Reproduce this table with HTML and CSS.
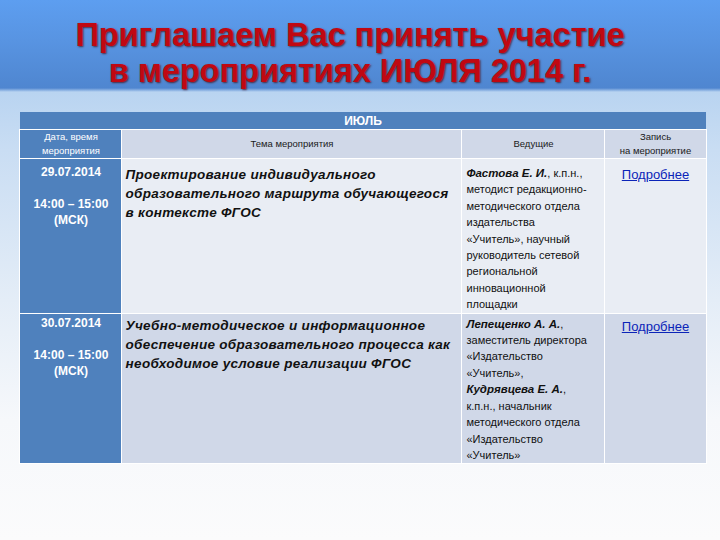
FILE: index.html
```html
<!DOCTYPE html>
<html lang="ru">
<head>
<meta charset="utf-8">
<link rel="stylesheet" href="styles.css">
</head>
<body>
<div class="page">
  <h1 class="title">Приглашаем Вас принять участие<br>в мероприятиях ИЮЛЯ 2014 г.</h1>
  <table class="events">
    <colgroup>
      <col class="c1"><col class="c2"><col class="c3"><col class="c4">
    </colgroup>
    <tr class="month"><th colspan="4">ИЮЛЬ</th></tr>
    <tr class="heads">
      <th class="date">Дата, время<br>мероприятия</th>
      <th>Тема мероприятия</th>
      <th>Ведущие</th>
      <th>Запись<br>на мероприятие</th>
    </tr>
    <tr class="row r1">
      <td class="date"><b>29.07.2014</b><br><br><b>14:00 – 15:00<br>(МСК)</b></td>
      <td class="topic">Проектирование индивидуального<br>образовательного маршрута обучающегося<br>в контексте ФГОС</td>
      <td class="host"><b><i>Фастова Е. И.</i></b>, к.п.н.,<br>методист редакционно-<br>методического отдела<br>издательства<br>«Учитель», научный<br>руководитель сетевой<br>региональной<br>инновационной<br>площадки</td>
      <td class="reg"><a href="#">Подробнее</a></td>
    </tr>
    <tr class="row r2">
      <td class="date"><b>30.07.2014</b><br><br><b>14:00 – 15:00<br>(МСК)</b></td>
      <td class="topic">Учебно-методическое и информационное<br>обеспечение образовательного процесса как<br>необходимое условие реализации ФГОС</td>
      <td class="host"><b><i>Лепещенко А. А.</i></b>,<br>заместитель директора<br>«Издательство<br>«Учитель»,<br><b><i>Кудрявцева Е. А.</i></b>,<br>к.п.н., начальник<br>методического отдела<br>«Издательство<br>«Учитель»</td>
      <td class="reg"><a href="#">Подробнее</a></td>
    </tr>
  </table>
</div>
</body>
</html>
```
FILE: styles.css
```css
html, body {
  margin: 0;
  padding: 0;
}
body {
  width: 720px;
  height: 540px;
  overflow: hidden;
  font-family: "Liberation Sans", Arial, sans-serif;
  background: linear-gradient(to bottom,
    #5d9ef0 0px, #5894e2 40px, #4f86d0 88px,
    #b9d4f1 92px, #c9ddf3 150px, #e4edf7 300px, #f6f8fb 420px, #fbfbfc 540px);
}
.page {
  display: flex;
  flex-direction: column;
  align-items: center;
}
.title {
  margin: 17px 20px 0 0;
  height: 95px;
  font-size: 32.5px;
  line-height: 36px;
  font-weight: bold;
  color: #c00812;
  text-align: center;
  text-shadow: 1px 1px 2px rgba(70, 0, 0, 0.7);
  letter-spacing: 0;
}
.events {
  width: 686px;
  table-layout: fixed;
  border-collapse: collapse;
  margin-left: 6px;
}
.c1 { width: 102px; }
.c2 { width: 340px; }
.c3 { width: 143px; }
.c4 { width: 101px; }
.events th, .events td {
  border: 1px solid #ffffff;
  padding: 0;
}
.month th {
  background: #4f81bd;
  color: #ffffff;
  font-size: 12px;
  font-weight: bold;
  height: 17px;
  text-align: center;
  border-top: none;
  border-left: none;
  border-right: none;
}
.heads th {
  background: #d0d8e8;
  color: #1a1a1a;
  font-size: 9.5px;
  font-weight: normal;
  line-height: 14px;
  height: 28px;
  text-align: center;
}
.heads th.date {
  background: #4f81bd;
  color: #ffffff;
}
.row td {
  vertical-align: top;
}
.r1 td { background: #e9edf4; }
.r2 td { background: #d0d8e8; }
.row td.date {
  background: #4f81bd;
  color: #ffffff;
  text-align: center;
  font-size: 12px;
  line-height: 16px;
  padding-top: 5px;
}
.r2 td.date { padding-top: 1px; }
.topic {
  font-size: 13.5px;
  font-weight: bold;
  font-style: italic;
  line-height: 19px;
  color: #111111;
  padding: 6px 0 0 3px !important;
  letter-spacing: 0.3px;
}
.r2 .topic { padding-top: 2px !important; }
.host {
  font-size: 11px;
  line-height: 16.4px;
  color: #111111;
  padding: 6px 0 0 4px !important;
}
.r2 .host { padding-top: 2px !important; }
.host b i { font-size: 11.5px; }
.reg {
  text-align: center;
  padding-top: 6px !important;
}
.r2 .reg { padding-top: 3px !important; }
.reg a {
  color: #0b24b8;
  font-size: 13px;
  text-decoration: underline;
}
```
